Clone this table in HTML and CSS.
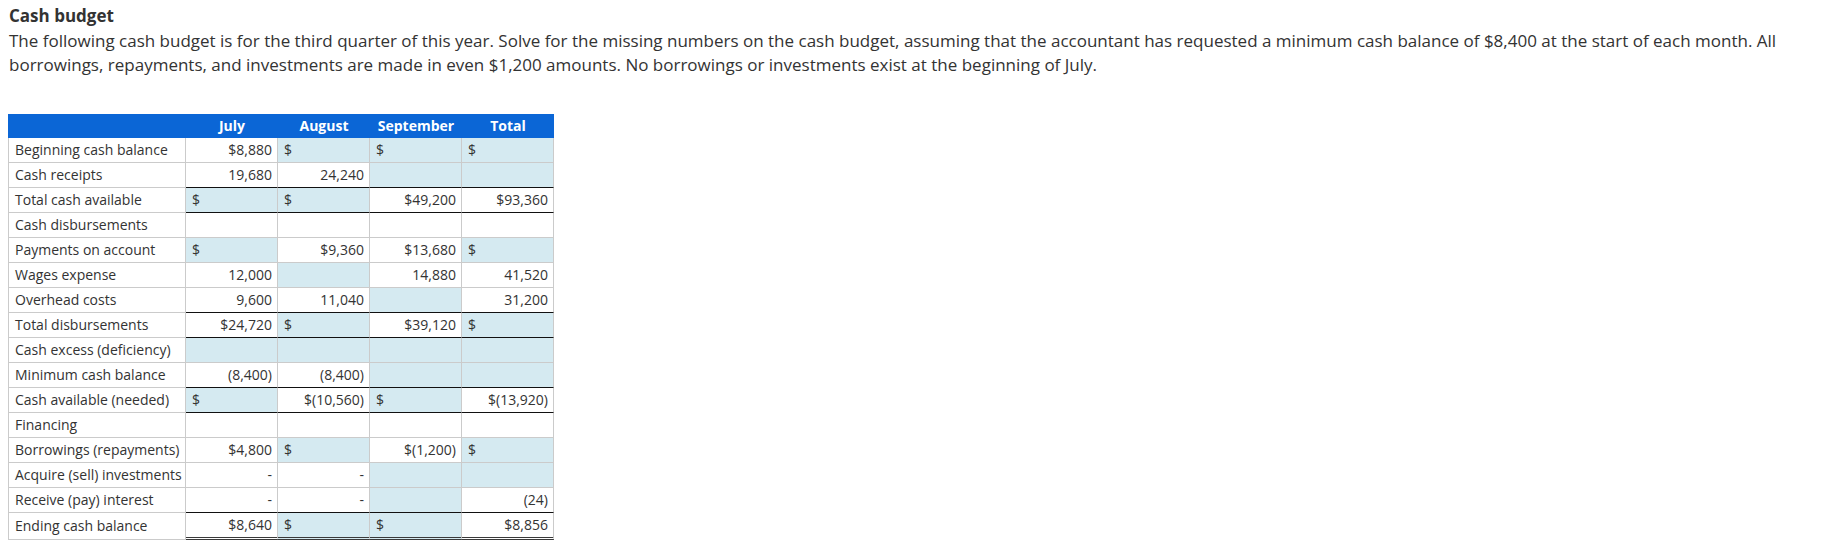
FILE: index.html
```html
<!DOCTYPE html>
<html lang="en">
<head>
<meta charset="utf-8">
<title>Cash budget</title>
<link rel="stylesheet" href="styles.css">
</head>
<body>
<h1 class="title">Cash budget</h1>
<p class="intro">The following cash budget is for the third quarter of this year. Solve for the missing numbers on the cash budget, assuming that the accountant has requested a minimum cash balance of $8,400 at the start of each month. All borrowings, repayments, and investments are made in even $1,200 amounts. No borrowings or investments exist at the beginning of July.</p>
<table class="budget">
  <colgroup>
    <col class="c-label"><col class="c-num"><col class="c-num"><col class="c-num"><col class="c-num">
  </colgroup>
  <thead>
    <tr><th></th><th>July</th><th>August</th><th>September</th><th>Total</th></tr>
  </thead>
  <tbody>
    <tr>
      <td class="lbl">Beginning cash balance</td>
      <td class="num">$8,880</td><td class="in">$</td><td class="in">$</td><td class="in">$</td>
    </tr>
    <tr class="rule">
      <td class="lbl">Cash receipts</td>
      <td class="num">19,680</td><td class="num">24,240</td><td class="in"></td><td class="in"></td>
    </tr>
    <tr class="rule">
      <td class="lbl">Total cash available</td>
      <td class="in">$</td><td class="in">$</td><td class="num">$49,200</td><td class="num">$93,360</td>
    </tr>
    <tr>
      <td class="lbl">Cash disbursements</td>
      <td></td><td></td><td></td><td></td>
    </tr>
    <tr>
      <td class="lbl">Payments on account</td>
      <td class="in">$</td><td class="num">$9,360</td><td class="num">$13,680</td><td class="in">$</td>
    </tr>
    <tr>
      <td class="lbl">Wages expense</td>
      <td class="num">12,000</td><td class="in"></td><td class="num">14,880</td><td class="num">41,520</td>
    </tr>
    <tr class="rule">
      <td class="lbl">Overhead costs</td>
      <td class="num">9,600</td><td class="num">11,040</td><td class="in"></td><td class="num">31,200</td>
    </tr>
    <tr class="rule">
      <td class="lbl">Total disbursements</td>
      <td class="num">$24,720</td><td class="in">$</td><td class="num">$39,120</td><td class="in">$</td>
    </tr>
    <tr>
      <td class="lbl">Cash excess (deficiency)</td>
      <td class="in"></td><td class="in"></td><td class="in"></td><td class="in"></td>
    </tr>
    <tr class="rule">
      <td class="lbl">Minimum cash balance</td>
      <td class="num">(8,400)</td><td class="num">(8,400)</td><td class="in"></td><td class="in"></td>
    </tr>
    <tr class="rule">
      <td class="lbl">Cash available (needed)</td>
      <td class="in">$</td><td class="num">$(10,560)</td><td class="in">$</td><td class="num">$(13,920)</td>
    </tr>
    <tr>
      <td class="lbl">Financing</td>
      <td></td><td></td><td></td><td></td>
    </tr>
    <tr>
      <td class="lbl">Borrowings (repayments)</td>
      <td class="num">$4,800</td><td class="in">$</td><td class="num">$(1,200)</td><td class="in">$</td>
    </tr>
    <tr>
      <td class="lbl">Acquire (sell) investments</td>
      <td class="num">-</td><td class="num">-</td><td class="in"></td><td class="in"></td>
    </tr>
    <tr class="rule">
      <td class="lbl">Receive (pay) interest</td>
      <td class="num">-</td><td class="num">-</td><td class="in"></td><td class="num">(24)</td>
    </tr>
    <tr class="final">
      <td class="lbl">Ending cash balance</td>
      <td class="num">$8,640</td><td class="in">$</td><td class="in">$</td><td class="num">$8,856</td>
    </tr>
  </tbody>
</table>
</body>
</html>
```

FILE: styles.css
```css
body {
  margin: 8px;
  font-family: "Open Sans", "Noto Sans", sans-serif;
  color: #333333;
  background: #ffffff;
}

.title {
  margin: 0 0 0 1px;
  font-size: 17px;
  line-height: 16px;
  font-weight: 700;
}

.intro {
  margin: 5px 0 0 0;
  font-size: 17px;
  line-height: 24px;
  padding-left: 1px;
}

.budget {
  margin-top: 37px;
  border-collapse: separate;
  border-spacing: 0;
  table-layout: fixed;
  width: 546px;
  font-size: 14px;
  line-height: 20px;
}

.c-label { width: 178px; }
.c-num { width: 92px; }

.budget th {
  background: #0b66d6;
  color: #ffffff;
  font-weight: 700;
  height: 24px;
  padding: 0;
  text-align: center;
  vertical-align: middle;
}

.budget td {
  height: 25px;
  padding: 0 5px 0 6px;
  border-right: 1px solid #cbcbcb;
  border-bottom: 1px solid #cbcbcb;
  white-space: nowrap;
  vertical-align: middle;
  box-sizing: border-box;
}

.budget td.lbl {
  border-left: 1px solid #cbcbcb;
}

.budget td.num {
  text-align: right;
}

.budget td.in {
  background: #d5eaf1;
  text-align: left;
}

.budget tr.rule td:not(.lbl) {
  border-bottom-color: #111111;
}

.budget tr.final td {
  height: 27px;
}

.budget tr.final td:not(.lbl) {
  border-bottom: 3px double #3a3a3a;
}
```
